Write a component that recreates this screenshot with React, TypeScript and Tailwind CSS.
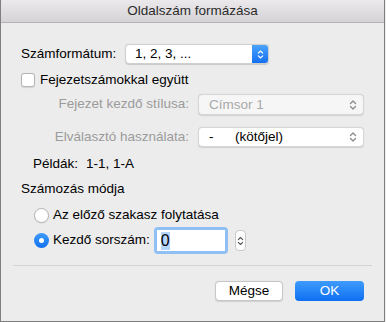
import React from 'react';

const font = { fontFamily: '"Liberation Sans", Arial, sans-serif' };

function Chevrons({ color = '#6b6b6b', w = 8, h = 12 }: { color?: string; w?: number; h?: number }) {
  return (
    <svg width={w} height={h} viewBox="0 0 8 12" fill="none" stroke={color} strokeWidth="1.3" strokeLinecap="round" strokeLinejoin="round">
      <path d="M1.5 4.5 L4 2 L6.5 4.5" />
      <path d="M1.5 7.5 L4 10 L6.5 7.5" />
    </svg>
  );
}

function PopUp({ value, disabled, className }: { value: React.ReactNode; disabled?: boolean; className: string }) {
  return (
    <div
      className={`flex items-center justify-between rounded-[4px] border border-[#d6d6d6] pl-[10px] pr-[6px] shadow-[0_0.5px_1px_rgba(0,0,0,0.12)] ${disabled ? 'bg-[#f6f6f6] text-[#a9a9a9]' : 'bg-white text-black'} ${className}`}
    >
      <span className="leading-none">{value}</span>
      <Chevrons color="#8a8a8a" />
    </div>
  );
}

export default function App() {
  return (
    <div className="h-[322px] w-[386px] bg-[#ececec]" style={font}>
      <div className="flex h-[322px] w-[385px] flex-col border-x border-b border-[#7f7f7f] bg-[#ececec] text-[13.5px] text-black">
        {/* title bar */}
        <div className="flex h-[23px] shrink-0 items-center justify-center border-b border-[#b3b3b3] bg-gradient-to-b from-[#ebe9eb] to-[#d5d3d5] text-[#2c2c2c]">
          Oldalszám formázása
        </div>

        <div className="flex flex-col pl-[20px] pr-[12px]">
          {/* Számformátum */}
          <div className="mt-[21px] flex h-[20px] items-center">
            <span className="w-[104px]">Számformátum:</span>
            <div className="flex h-[20px] w-[144px] items-stretch overflow-hidden rounded-[4px] border border-[#cfcfcf] bg-white shadow-[0_0.5px_1px_rgba(0,0,0,0.15)]">
              <span className="flex flex-1 items-center pl-[9px] leading-none">1, 2, 3, ...</span>
              <div className="flex w-[16px] items-center justify-center bg-gradient-to-b from-[#4aa3fc] to-[#136ff2]">
                <Chevrons color="#ffffff" w={7} h={11} />
              </div>
            </div>
          </div>

          {/* checkbox */}
          <div className="mt-[9px] flex h-[14px] items-center">
            <div className="h-[14px] w-[14px] rounded-[3px] border border-[#b5b5b5] bg-white shadow-[0_0.5px_1px_rgba(0,0,0,0.1)]" />
            <span className="ml-[5px] leading-none">Fejezetszámokkal együtt</span>
          </div>

          {/* Fejezet kezdő stílusa */}
          <div className="mt-[7px] flex h-[21px] items-center">
            <span className="w-[169px] pr-[1px] text-right text-[#9b9b9b]">Fejezet kezdő stílusa:</span>
            <PopUp value="Címsor 1" disabled className="ml-[8px] h-[21px] w-[166px]" />
          </div>

          {/* Elválasztó */}
          <div className="mt-[12px] flex h-[20px] items-center">
            <span className="w-[169px] pr-[1px] text-right text-[#9b9b9b]">Elválasztó használata:</span>
            <PopUp
              value={
                <span className="flex">
                  <span className="w-[26px]">-</span>
                  <span>(kötőjel)</span>
                </span>
              }
              className="ml-[8px] h-[20px] w-[166px]"
            />
          </div>

          {/* Példák */}
          <div className="mt-[9px] flex h-[16px] items-center pl-[12px]">
            <span className="w-[53px]">Példák:</span>
            <span>1-1, 1-A</span>
          </div>

          {/* Számozás módja */}
          <div className="mt-[9px] flex h-[16px] items-center">Számozás módja</div>

          {/* radio 1 */}
          <div className="mt-[10px] flex h-[16px] items-center pl-[13px]">
            <div className="h-[15px] w-[15px] rounded-full border border-[#b5b5b5] bg-white shadow-[0_0.5px_1px_rgba(0,0,0,0.1)]" />
            <span className="ml-[4px]">Az előző szakasz folytatása</span>
          </div>

          {/* radio 2 */}
          <div className="mt-[4px] flex h-[27px] items-center pl-[13px]">
            <div className="flex h-[15px] w-[15px] items-center justify-center rounded-full bg-gradient-to-b from-[#3d9bfb] to-[#1370f0]">
              <div className="h-[5px] w-[5px] rounded-full bg-white" />
            </div>
            <span className="ml-[4px] shrink-0 whitespace-nowrap">Kezdő sorszám:</span>
            <div className="ml-[4px] flex h-[27px] w-[74px] shrink-0 items-center rounded-[4px] bg-[#8fc0f4] p-[3px]">
              <div className="flex h-full w-full items-center bg-white pl-[4px]">
                <span className="bg-[#b4d5fe] text-[16px] leading-[18px]">0</span>
              </div>
            </div>
            <div className="ml-[7px] flex h-[21px] w-[11px] items-center justify-center rounded-[4px] border border-[#c8c8c8] bg-white">
              <Chevrons color="#555555" w={7} h={12} />
            </div>
          </div>
        </div>

        {/* separator */}
        <div className="mx-[12px] mt-[11px] h-px bg-[#d3d3d3]" />

        {/* buttons */}
        <div className="mt-[15px] flex justify-end gap-[12px] pr-[20px]">
          <button className="flex h-[20px] w-[68px] items-center justify-center rounded-[4px] border border-[#c6c6c6] bg-white shadow-[0_0.5px_1px_rgba(0,0,0,0.12)]">
            Mégse
          </button>
          <button className="flex h-[20px] w-[69px] items-center justify-center rounded-[4px] bg-gradient-to-b from-[#3e9bfc] to-[#0c6ef2] text-white">
            OK
          </button>
        </div>
      </div>
    </div>
  );
}
